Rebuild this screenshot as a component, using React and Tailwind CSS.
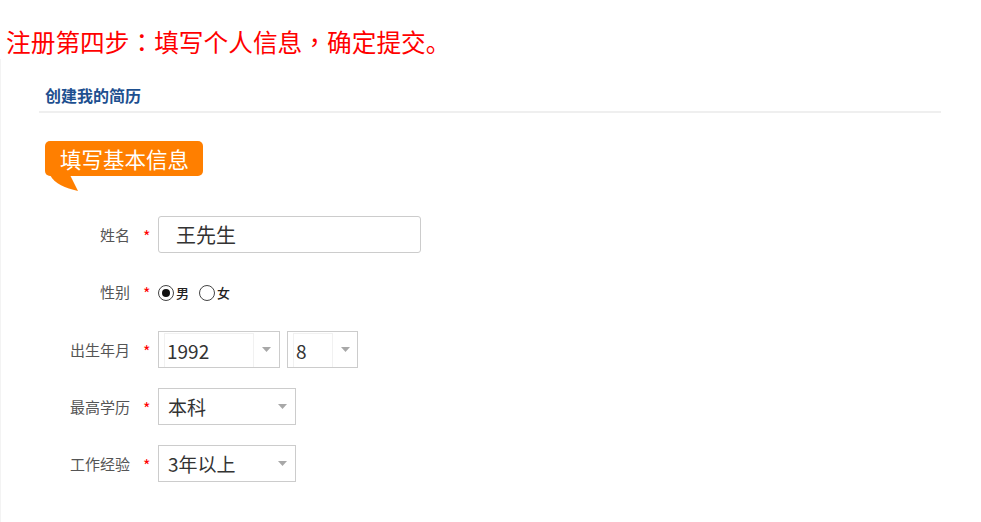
import React from "react";

const Arrow = () => (
  <svg width="9" height="5" viewBox="0 0 9 5" className="block">
    <path d="M0 0 L9 0 L4.5 5 Z" fill="#a8a8a8" />
  </svg>
);

function Row({ label, children }) {
  return (
    <div className="flex items-center h-[37px]">
      <div className="w-[90px] text-right text-[15px] leading-[20px] text-[#555]">{label}</div>
      <div className="w-[28px] pl-[13px] text-[16px] leading-[20px] text-[#f00] pt-[3px]">*</div>
      {children}
    </div>
  );
}

function Radio({ checked, label }) {
  return (
    <div className="flex items-center">
      <div className="w-[16px] h-[16px] rounded-full border border-[#444] flex items-center justify-center bg-white">
        {checked && <div className="w-[8px] h-[8px] rounded-full bg-[#111]" />}
      </div>
      <span className="ml-[2px] text-[13px] leading-[18px] font-medium text-[#222]">{label}</span>
    </div>
  );
}

function Select({ value, width, inner, innerWidth }) {
  return (
    <div
      className={`h-[37px] border border-[#cccccc] bg-white flex items-stretch ${width}`}
    >
      {inner ? (
        <>
          <div className={`ml-[5px] mt-[1px] border-l border-r border-t border-[#f1f1f1] flex items-center pl-[2px] ${innerWidth}`}>
            <span className="text-[19px] leading-[24px] text-[#333]">{value}</span>
          </div>
          <div className="flex-1 flex items-center justify-center pb-[1px]">
            <Arrow />
          </div>
        </>
      ) : (
        <>
          <div className="flex-1 flex items-center pl-[9px]">
            <span className="text-[19px] leading-[24px] text-[#333]">{value}</span>
          </div>
          <div className="flex items-center pr-[8px] pb-[1px]">
            <Arrow />
          </div>
        </>
      )}
    </div>
  );
}

export default function App() {
  return (
    <div className="w-[981px] h-[522px] bg-white overflow-hidden font-['Noto_Sans_CJK_SC','Noto_Sans',sans-serif]">
      <h1 className="pl-[6px] pt-[24px] text-[24.7px] leading-[35px] font-normal text-[#ff0000]">
        注册第四步<span className="font-['Noto_Sans_CJK_TC',sans-serif]">：</span>填写个人信息<span className="font-['Noto_Sans_CJK_TC',sans-serif]">，</span>确定提交。
      </h1>
      <div className="border-l border-[#f3f3f3] h-[463px]">
        <div className="pl-[38px] w-[940px]">
          <div className="pt-[26px] pl-[6px] text-[16px] leading-[21px] font-bold text-[#1d4f8f]">
            创建我的简历
          </div>
          <div className="mt-[5px] h-[2px] bg-[#efefef]" />
          <div className="mt-[28px] ml-[6px] relative w-[158px]">
            <div className="h-[35px] rounded-[5px] bg-[#ff7f00] flex items-center pl-[15px]">
              <span className="text-[21.5px] leading-[28px] text-white">填写基本信息</span>
            </div>
            <svg
              width="40"
              height="17"
              viewBox="0 0 40 17"
              className="absolute left-0 top-[34px]"
            >
              <path d="M5 0 C10 9 20 13 33 16 L25 0 Z" fill="#ff7f00" />
            </svg>
          </div>
          <div className="mt-[40px] flex flex-col gap-[20px] -ml-[38px] pl-[39px]">
            <Row label="姓名">
              <div className="w-[263px] h-[37px] border border-[#cccccc] rounded-[3px] flex items-center pl-[17px]">
                <span className="text-[20px] leading-[26px] text-[#333]">王先生</span>
              </div>
            </Row>
            <Row label="性别">
              <div className="flex items-center gap-[10px] mt-[2px]">
                <Radio checked label="男" />
                <Radio label="女" />
              </div>
            </Row>
            <div className="mt-[1px]">
              <Row label="出生年月">
                <div className="flex gap-[7px]">
                  <Select value="1992" width="w-[122px]" inner innerWidth="w-[90px]" />
                  <Select value="8" width="w-[71px]" inner innerWidth="w-[40px]" />
                </div>
              </Row>
            </div>
            <Row label="最高学历">
              <Select value="本科" width="w-[138px]" />
            </Row>
            <Row label="工作经验">
              <Select value="3年以上" width="w-[138px]" />
            </Row>
          </div>
        </div>
      </div>
    </div>
  );
}
